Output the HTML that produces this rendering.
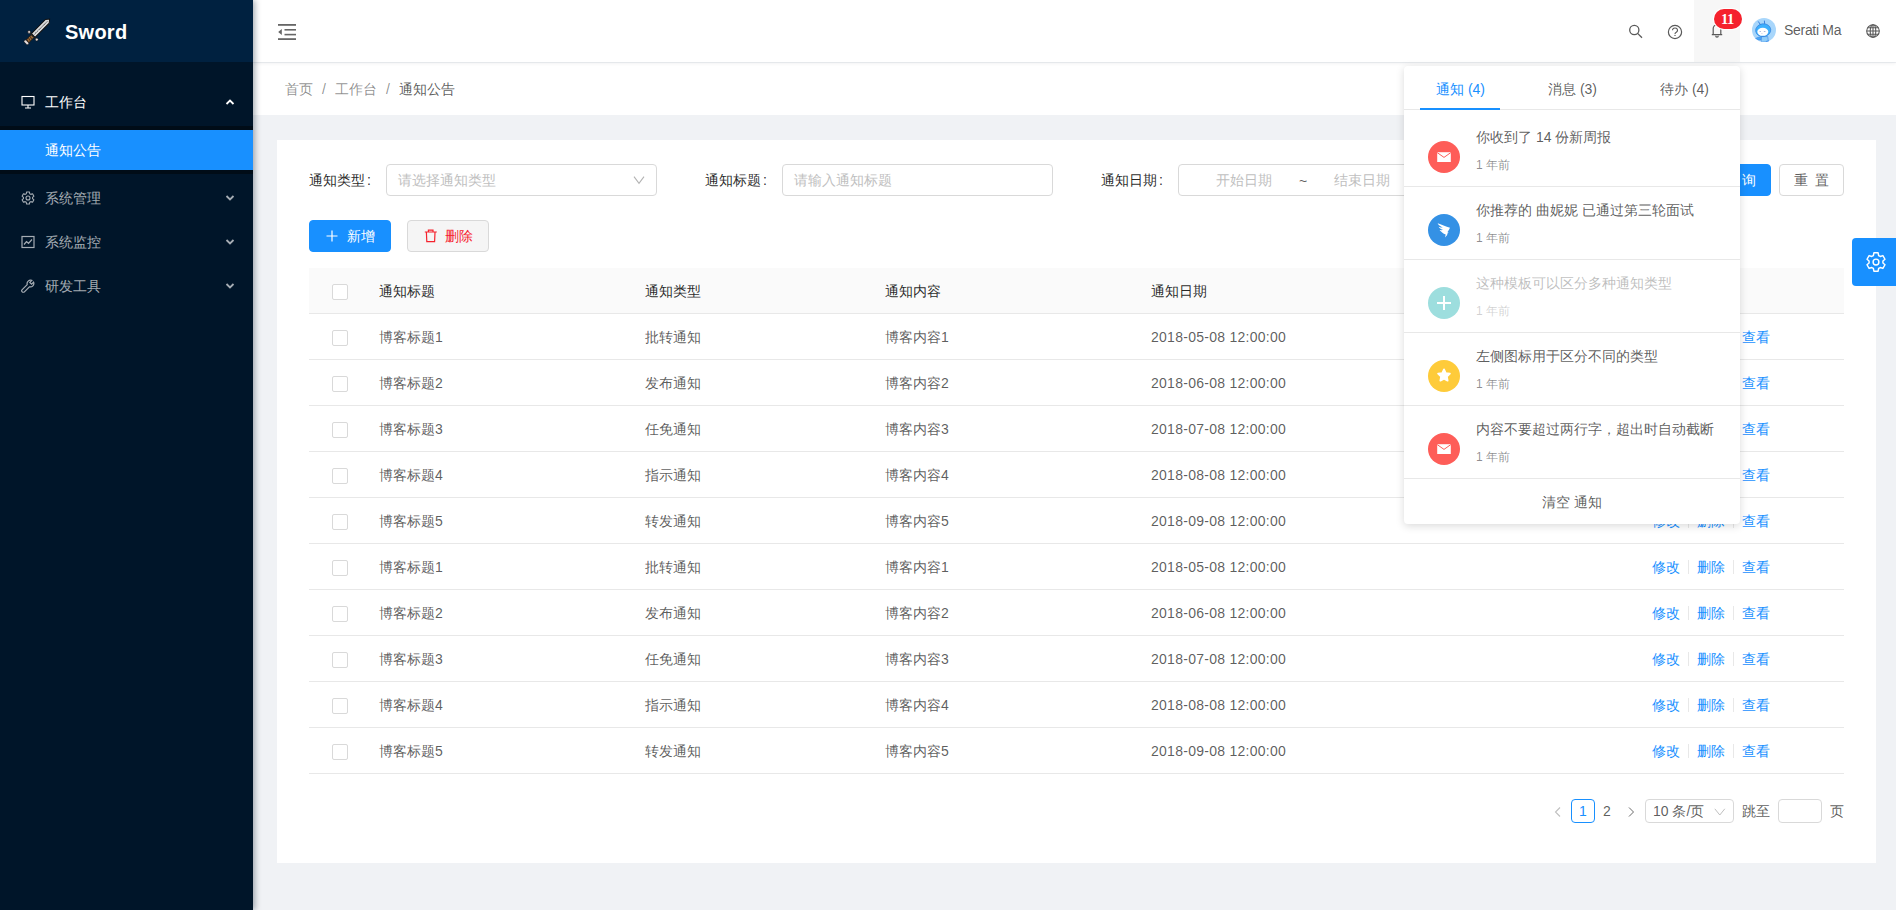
<!DOCTYPE html>
<html><head><meta charset="utf-8">
<style>
*{box-sizing:border-box;margin:0;padding:0}
html,body{width:1896px;height:910px;overflow:hidden}
body{position:relative;background:#f0f2f5;font-family:"Liberation Sans",sans-serif;font-size:14px;color:rgba(0,0,0,.65)}
.abs{position:absolute}
#side{position:absolute;left:0;top:0;width:253px;height:910px;background:#001529;box-shadow:2px 0 6px rgba(0,21,41,.35);z-index:5}
#logo{position:absolute;left:0;top:0;width:253px;height:62px;background:#002140}
#logo .t{position:absolute;left:65px;top:20px;font-size:20px;font-weight:bold;color:#fff;line-height:24px;letter-spacing:.25px}
.mi{position:absolute;left:0;width:253px;height:40px;line-height:40px;color:rgba(255,255,255,.65)}
.mi .tx{position:absolute;left:45px;top:0}
.mi svg.ic{position:absolute;left:21px;top:13px}
.mi svg.ar{position:absolute;left:225px;top:17px}
#header{position:absolute;left:253px;top:0;right:0;height:62px;background:#fff;box-shadow:0 1px 4px rgba(0,21,41,.08);z-index:2}
#bc{position:absolute;left:253px;top:63px;right:0;height:52px;background:#fff;z-index:1}
#card{position:absolute;left:277px;top:140px;width:1599px;height:723px;background:#fff}
.lbl{position:absolute;color:rgba(0,0,0,.85);line-height:20px}
.inp{position:absolute;height:32px;border:1px solid #d9d9d9;border-radius:4px;background:#fff}
.ph{position:absolute;color:#bfbfbf;line-height:20px}
.btn{position:absolute;height:32px;border-radius:4px;line-height:30px;text-align:center}
.cb{position:absolute;width:16px;height:16px;border:1px solid #d9d9d9;border-radius:2px;background:#fff}
.row{position:absolute;left:309px;width:1535px;height:46px;border-bottom:1px solid #e8e8e8}
.cell{position:absolute;top:13px;line-height:20px}
.act{color:#1890ff}
.dv{display:inline-block;width:1px;height:14px;background:#e8e8e8;margin:0 8px;vertical-align:-2px}
#pop{position:absolute;left:1404px;top:66px;width:336px;height:458px;background:#fff;border-radius:4px;box-shadow:0 2px 8px rgba(0,0,0,.15);z-index:10}
.tab{top:13px;line-height:20px;width:48px;white-space:nowrap;color:rgba(0,0,0,.65)}
.nitem{left:0;width:336px;height:73px}
.av{left:24px;width:32px;height:32px;border-radius:50%}
.nt{left:72px;line-height:22px;color:rgba(0,0,0,.65);white-space:nowrap}
.nd{left:72px;font-size:12px;line-height:18px;color:rgba(0,0,0,.45);white-space:nowrap}
</style></head>
<body>
<div id="side">
  <div id="logo">
    <svg class="abs" style="left:17px;top:12px" width="40" height="40" viewBox="0 0 40 40">
      <g transform="translate(.6 -.9) rotate(45 20 20)">
      <path d="M17.4 26.2 L17.4 6.2 L20 3 L22.6 6.2 L22.6 26.2 Z" fill="#dcdcdc" stroke="#111" stroke-width="1"/>
      <path d="M20 6.5 L20 25" stroke="#222" stroke-width=".9" stroke-dasharray="1.2 .6"/>
      <rect x="15.5" y="26" width="9" height="1.2" fill="#222"/>
      <circle cx="14.6" cy="26.6" r="1.45" fill="#e2dada" stroke="#111" stroke-width=".6"/>
      <circle cx="25.4" cy="26.6" r="1.45" fill="#e2dada" stroke="#111" stroke-width=".6"/>
      <rect x="18" y="27.2" width="4" height="7.6" fill="#9a6a3a" stroke="#111" stroke-width=".7"/>
      <path d="M18 29 L22 30 M18 31.2 L22 32.2 M18 33.4 L22 34.4" stroke="#3a2410" stroke-width=".8"/>
      <rect x="17.3" y="34.6" width="5.4" height="2.6" rx="1" fill="#e6dede" stroke="#111" stroke-width=".6"/>
      </g>
    </svg>
    <div class="t">Sword</div>
  </div>
  <div class="mi" style="top:82px;color:#fff">
    <svg class="ic" width="14" height="14" viewBox="0 0 14 14" fill="none" stroke="#fff" stroke-width="1.1"><rect x="1" y="1.5" width="12" height="8.5"/><path d="M7 10v3M4 13h6"/></svg>
    <span class="tx">工作台</span>
    <svg class="ar" width="10" height="6" viewBox="0 0 10 6" fill="none" stroke="#fff" stroke-width="1.8"><path d="M1.5 5L5 1.5L8.5 5"/></svg>
  </div>
  <div class="abs" style="left:0;top:126px;width:253px;height:48px;background:#000c17"></div>
  <div class="mi" style="top:130px;background:#1890ff;color:#fff"><span class="tx">通知公告</span></div>
  <div class="mi" style="top:178px">
    <svg class="ic" width="14" height="14" viewBox="0 0 14 14" fill="none" stroke="rgba(255,255,255,.65)" stroke-width="1.1" stroke-linejoin="round"><path d="M5.28 2.73 L5.61 0.96 L8.39 0.96 L8.72 2.73 L9.83 3.38 L11.53 2.77 L12.93 5.19 L11.56 6.36 L11.56 7.64 L12.93 8.81 L11.53 11.23 L9.83 10.62 L8.72 11.27 L8.39 13.04 L5.61 13.04 L5.28 11.27 L4.17 10.62 L2.47 11.23 L1.07 8.81 L2.44 7.64 L2.44 6.36 L1.07 5.19 L2.47 2.77 L4.17 3.38Z"/><circle cx="7" cy="7" r="2"/></svg>
    <span class="tx">系统管理</span>
    <svg class="ar" width="10" height="6" viewBox="0 0 10 6" fill="none" stroke="rgba(255,255,255,.65)" stroke-width="1.8"><path d="M1.5 1L5 4.5L8.5 1"/></svg>
  </div>
  <div class="mi" style="top:222px">
    <svg class="ic" width="14" height="14" viewBox="0 0 14 14" fill="none" stroke="rgba(255,255,255,.65)" stroke-width="1.2"><rect x="1" y="1.5" width="12" height="11"/><path d="M3 9.5l2.5-3 2 1.8L11 4.5"/></svg>
    <span class="tx">系统监控</span>
    <svg class="ar" width="10" height="6" viewBox="0 0 10 6" fill="none" stroke="rgba(255,255,255,.65)" stroke-width="1.8"><path d="M1.5 1L5 4.5L8.5 1"/></svg>
  </div>
  <div class="mi" style="top:266px">
    <svg class="ic" width="14" height="14" viewBox="0 0 14 14" fill="none" stroke="rgba(255,255,255,.65)" stroke-width="1.2"><path d="M12.6 3.2l-2 2-1.8-1.8 2-2A3.5 3.5 0 0 0 6.2 5.6L1.2 10.6a1.5 1.5 0 0 0 2.2 2.2l5-5a3.5 3.5 0 0 0 4.2-4.6z"/></svg>
    <span class="tx">研发工具</span>
    <svg class="ar" width="10" height="6" viewBox="0 0 10 6" fill="none" stroke="rgba(255,255,255,.65)" stroke-width="1.8"><path d="M1.5 1L5 4.5L8.5 1"/></svg>
  </div>
</div>
<div id="header">
  <svg class="abs" style="left:25px;top:23px" width="20" height="18" viewBox="0 0 20 18" fill="#666"><rect x="0" y="1" width="18" height="1.8"/><rect x="6.5" y="6" width="11.5" height="1.6"/><rect x="6.5" y="10.8" width="11.5" height="1.6"/><rect x="0" y="15.2" width="18" height="1.8"/><path d="M0.2 9 L3.8 6 L3.8 12 Z"/></svg>
  <svg class="abs" style="left:1374px;top:22px" width="16" height="18" viewBox="0 0 16 18" fill="none" stroke="#595959" stroke-width="1.3"><circle cx="7.3" cy="8" r="4.6"/><path d="M10.6 11.4 L15 15.8"/></svg>
  <svg class="abs" style="left:1414px;top:24px" width="16" height="16" viewBox="0 0 16 16" fill="none" stroke="#595959" stroke-width="1.2"><circle cx="8" cy="8" r="6.6"/><path d="M5.5 6.3a2.5 2.3 0 1 1 3.8 2c-.9.5-1.3.9-1.3 1.6" stroke-width="1.15"/><circle cx="8" cy="11.4" r=".7" fill="#595959" stroke="none"/></svg>
  <div class="abs" style="left:1441px;top:0;width:46px;height:62px;background:#f7f7f7"></div>
  <svg class="abs" style="left:1457px;top:20px" width="14" height="18" viewBox="0 0 14 18" fill="none" stroke="#595959" stroke-width="1.2"><path d="M3.2 14.2V8.6a3.8 3.8 0 0 1 7.6 0V14.2M1.8 14.6h10.4M5.7 15.8a1.3 1.3 0 0 0 2.6 0"/></svg>
  <div class="abs" style="left:1461px;top:9px;width:28px;height:20px;border-radius:10px;background:#f5222d;color:#fff;font-size:14.5px;line-height:21px;text-align:center;box-shadow:0 0 0 1px #fff;font-family:'Liberation Serif',serif;font-weight:bold;letter-spacing:-.4px;text-indent:-1px">11</div>
  <svg class="abs" style="left:1499px;top:18px" width="24" height="24" viewBox="0 0 24 24"><defs><clipPath id="avc"><circle cx="12" cy="12" r="12"/></clipPath></defs><g clip-path="url(#avc)"><rect width="24" height="24" fill="#a8d6fb"/>
<path d="M3.2 20.5c2-1 4-1.6 6.5-1.8l-.5 3.2c-2 .4-4 .4-6-1.4z" fill="#4aa8f8" stroke="#3a7fdc" stroke-width=".5"/>
<path d="M9.6 18.6h6.2l.6 5.4H9.2z" fill="#8fcdf9" stroke="#3a7fdc" stroke-width=".5"/>
<path d="M14 23c.8-.4 2-.6 3-.4l-.4 1.4H13.6z" fill="#3a8ef0"/>
<ellipse cx="11.2" cy="12.2" rx="7.6" ry="6.4" fill="#3eb0fd" stroke="#2f78d8" stroke-width=".6" transform="rotate(-8 11.2 12.2)"/>
<path d="M6.2 3.4L8.4 6.6M12.4 2.6L12.6 5.8" stroke="#2f78d8" stroke-width=".9"/>
<ellipse cx="10.8" cy="13.8" rx="5.5" ry="4" fill="#fff"/>
<path d="M7.6 13.5h1.3M11.8 13.5h1.6M9.5 15l.5.6" stroke="#9fb0d8" stroke-width=".9"/>
</g></svg>
  <div class="abs" style="left:1531px;top:20px;line-height:20px;font-size:14px;color:rgba(0,0,0,.65);letter-spacing:-.3px">Serati Ma</div>
  <svg class="abs" style="left:1613px;top:24px" width="14" height="14" viewBox="0 0 14 14" fill="none" stroke="#595959" stroke-width="1.1"><circle cx="7" cy="7" r="6.3"/><ellipse cx="7" cy="7" rx="2.8" ry="6.3"/><path d="M7 .7v12.6M.7 7h12.6M1.6 3.8h10.8M1.6 10.2h10.8"/></svg>
</div>
<div id="bc">
  <div class="abs" style="left:32px;top:16px;line-height:20px;color:rgba(0,0,0,.45)">首页<span style="margin:0 9px">/</span>工作台<span style="margin:0 9px">/</span><span style="color:rgba(0,0,0,.65)">通知公告</span></div>
</div>
<div id="card"></div>
<div class="lbl" style="left:309px;top:170px">通知类型<span style="margin-left:2px">:</span></div>
<div class="inp" style="left:386px;top:164px;width:271px"><span class="ph" style="left:11px;top:5px">请选择通知类型</span><svg class="abs" style="left:246px;top:11px" width="12" height="9" viewBox="0 0 12 9" fill="none" stroke="#b3b3b3" stroke-width="1.1"><path d="M1 .6L6 7.3L11 .6"/></svg></div>
<div class="lbl" style="left:705px;top:170px">通知标题<span style="margin-left:2px">:</span></div>
<div class="inp" style="left:782px;top:164px;width:271px"><span class="ph" style="left:11px;top:5px">请输入通知标题</span></div>
<div class="lbl" style="left:1101px;top:170px">通知日期<span style="margin-left:2px">:</span></div>
<div class="inp" style="left:1178px;top:164px;width:500px"><span class="ph" style="left:37px;top:5px">开始日期</span><span class="ph" style="left:120px;top:6px;color:rgba(0,0,0,.65)">~</span><span class="ph" style="left:155px;top:5px">结束日期</span></div>
<div class="btn" style="left:1706px;top:164px;width:65px;background:#1890ff;color:#fff;border:1px solid #1890ff;word-spacing:3px">查 询</div>
<div class="btn" style="left:1779px;top:164px;width:65px;background:#fff;border:1px solid #d9d9d9;color:rgba(0,0,0,.65);word-spacing:3px">重 置</div>
<div class="btn" style="left:309px;top:220px;width:82px;background:#1890ff;color:#fff;border:1px solid #1890ff"><svg class="abs" style="left:16px;top:9px" width="12" height="12" viewBox="0 0 12 12" stroke="#fff" stroke-width="1.2"><path d="M6 0.5v11M0.5 6h11"/></svg><span class="abs" style="left:37px;top:0">新增</span></div>
<div class="btn" style="left:407px;top:220px;width:82px;background:#f5f5f5;color:#f5222d;border:1px solid #d9d9d9"><svg class="abs" style="left:16px;top:8px" width="14" height="14" viewBox="0 0 14 14" fill="none" stroke="#f5222d" stroke-width="1.2"><path d="M.8 3h12M4.4 2.8V1.2h4.6V2.8M2.4 3.2l.4 9.4h7.8l.4-9.4"/></svg><span class="abs" style="left:37px;top:0">删除</span></div>
<div class="abs" style="left:309px;top:268px;width:1535px;height:46px;background:#fafafa;border-bottom:1px solid #e8e8e8"></div>
<div class="cb" style="left:332px;top:284px"></div>
<div class="lbl" style="left:379px;top:281px">通知标题</div>
<div class="lbl" style="left:645px;top:281px">通知类型</div>
<div class="lbl" style="left:885px;top:281px">通知内容</div>
<div class="lbl" style="left:1151px;top:281px">通知日期</div>
<div class="row" style="top:314px"><div class="cb" style="left:23px;top:16px"></div><div class="cell" style="left:70px">博客标题1</div><div class="cell" style="left:336px">批转通知</div><div class="cell" style="left:576px">博客内容1</div><div class="cell" style="left:842px;letter-spacing:.27px">2018-05-08 12:00:00</div><div class="cell act" style="left:1343px">修改<i class="dv"></i>删除<i class="dv"></i>查看</div></div>
<div class="row" style="top:360px"><div class="cb" style="left:23px;top:16px"></div><div class="cell" style="left:70px">博客标题2</div><div class="cell" style="left:336px">发布通知</div><div class="cell" style="left:576px">博客内容2</div><div class="cell" style="left:842px;letter-spacing:.27px">2018-06-08 12:00:00</div><div class="cell act" style="left:1343px">修改<i class="dv"></i>删除<i class="dv"></i>查看</div></div>
<div class="row" style="top:406px"><div class="cb" style="left:23px;top:16px"></div><div class="cell" style="left:70px">博客标题3</div><div class="cell" style="left:336px">任免通知</div><div class="cell" style="left:576px">博客内容3</div><div class="cell" style="left:842px;letter-spacing:.27px">2018-07-08 12:00:00</div><div class="cell act" style="left:1343px">修改<i class="dv"></i>删除<i class="dv"></i>查看</div></div>
<div class="row" style="top:452px"><div class="cb" style="left:23px;top:16px"></div><div class="cell" style="left:70px">博客标题4</div><div class="cell" style="left:336px">指示通知</div><div class="cell" style="left:576px">博客内容4</div><div class="cell" style="left:842px;letter-spacing:.27px">2018-08-08 12:00:00</div><div class="cell act" style="left:1343px">修改<i class="dv"></i>删除<i class="dv"></i>查看</div></div>
<div class="row" style="top:498px"><div class="cb" style="left:23px;top:16px"></div><div class="cell" style="left:70px">博客标题5</div><div class="cell" style="left:336px">转发通知</div><div class="cell" style="left:576px">博客内容5</div><div class="cell" style="left:842px;letter-spacing:.27px">2018-09-08 12:00:00</div><div class="cell act" style="left:1343px">修改<i class="dv"></i>删除<i class="dv"></i>查看</div></div>
<div class="row" style="top:544px"><div class="cb" style="left:23px;top:16px"></div><div class="cell" style="left:70px">博客标题1</div><div class="cell" style="left:336px">批转通知</div><div class="cell" style="left:576px">博客内容1</div><div class="cell" style="left:842px;letter-spacing:.27px">2018-05-08 12:00:00</div><div class="cell act" style="left:1343px">修改<i class="dv"></i>删除<i class="dv"></i>查看</div></div>
<div class="row" style="top:590px"><div class="cb" style="left:23px;top:16px"></div><div class="cell" style="left:70px">博客标题2</div><div class="cell" style="left:336px">发布通知</div><div class="cell" style="left:576px">博客内容2</div><div class="cell" style="left:842px;letter-spacing:.27px">2018-06-08 12:00:00</div><div class="cell act" style="left:1343px">修改<i class="dv"></i>删除<i class="dv"></i>查看</div></div>
<div class="row" style="top:636px"><div class="cb" style="left:23px;top:16px"></div><div class="cell" style="left:70px">博客标题3</div><div class="cell" style="left:336px">任免通知</div><div class="cell" style="left:576px">博客内容3</div><div class="cell" style="left:842px;letter-spacing:.27px">2018-07-08 12:00:00</div><div class="cell act" style="left:1343px">修改<i class="dv"></i>删除<i class="dv"></i>查看</div></div>
<div class="row" style="top:682px"><div class="cb" style="left:23px;top:16px"></div><div class="cell" style="left:70px">博客标题4</div><div class="cell" style="left:336px">指示通知</div><div class="cell" style="left:576px">博客内容4</div><div class="cell" style="left:842px;letter-spacing:.27px">2018-08-08 12:00:00</div><div class="cell act" style="left:1343px">修改<i class="dv"></i>删除<i class="dv"></i>查看</div></div>
<div class="row" style="top:728px"><div class="cb" style="left:23px;top:16px"></div><div class="cell" style="left:70px">博客标题5</div><div class="cell" style="left:336px">转发通知</div><div class="cell" style="left:576px">博客内容5</div><div class="cell" style="left:842px;letter-spacing:.27px">2018-09-08 12:00:00</div><div class="cell act" style="left:1343px">修改<i class="dv"></i>删除<i class="dv"></i>查看</div></div>
<div class="abs" style="left:1553px;top:805px"><svg width="10" height="12" viewBox="0 0 10 12" fill="none" stroke="rgba(0,0,0,.25)" stroke-width="1.1"><path d="M7 1.5L2.5 6 7 10.5"/></svg></div>
<div class="abs" style="left:1571px;top:799px;width:24px;height:24px;border:1px solid #1890ff;border-radius:4px;color:#1890ff;text-align:center;line-height:22px">1</div>
<div class="abs" style="left:1599px;top:799px;width:16px;height:24px;color:rgba(0,0,0,.65);text-align:center;line-height:24px">2</div>
<div class="abs" style="left:1626px;top:805px"><svg width="10" height="12" viewBox="0 0 10 12" fill="none" stroke="rgba(0,0,0,.65)" stroke-width=".9"><path d="M3 1.5L7.5 6 3 10.5"/></svg></div>
<div class="inp" style="left:1645px;top:799px;width:89px;height:24px"><span class="abs" style="left:7px;top:1px;line-height:20px;color:rgba(0,0,0,.65)">10 条/页</span><svg class="abs" style="left:68px;top:8px" width="12" height="8" viewBox="0 0 12 8" fill="none" stroke="#bfbfbf" stroke-width="1"><path d="M.8 .8l5 6.2 5-6.2"/></svg></div>
<div class="abs" style="left:1742px;top:801px;line-height:20px;color:rgba(0,0,0,.65)">跳至</div>
<div class="inp" style="left:1778px;top:799px;width:44px;height:24px"></div>
<div class="abs" style="left:1830px;top:801px;line-height:20px;color:rgba(0,0,0,.65)">页</div>
<div class="abs" style="left:1852px;top:238px;width:44px;height:48px;background:#1890ff;border-radius:4px 0 0 4px;z-index:3"><svg class="abs" style="left:13px;top:13px" width="22" height="22" viewBox="0 0 22 22" fill="none" stroke="#fff" stroke-width="1.45" stroke-linejoin="round"><path d="M8.38 4.51 L8.89 1.84 L13.11 1.84 L13.62 4.51 L15.31 5.48 L17.87 4.59 L19.99 8.25 L17.93 10.03 L17.93 11.97 L19.99 13.75 L17.87 17.41 L15.31 16.52 L13.62 17.49 L13.11 20.16 L8.89 20.16 L8.38 17.49 L6.69 16.52 L4.13 17.41 L2.01 13.75 L4.07 11.97 L4.07 10.03 L2.01 8.25 L4.13 4.59 L6.69 5.48Z"/><circle cx="11" cy="11" r="2.9"/></svg></div>

<div id="pop">
<div class="abs" style="left:0;top:0;width:336px;height:44px;border-bottom:1px solid #e8e8e8"></div>
<div class="abs" style="left:16px;top:42px;width:80px;height:2px;background:#1890ff"></div>
<div class="abs tab" style="left:32px;color:#1890ff">通知 (4)</div>
<div class="abs tab" style="left:144px">消息 (3)</div>
<div class="abs tab" style="left:256px">待办 (4)</div>
<div class="abs nitem" style="top:44px;opacity:1"><div class="abs av" style="top:31px;background:#fe5d58"><svg class="abs" style="left:8px;top:10px" width="16" height="12" viewBox="0 0 16 12"><path d="M1.2 1.2h13.6v9.8H1.2z" fill="#fff"/><path d="M1.2 1.6L8 6.4l6.8-4.8" fill="none" stroke="#fe5d58" stroke-width="1"/></svg></div><div class="abs nt" style="top:16px">你收到了 14 份新周报</div><div class="abs nd" style="top:46px">1 年前</div></div>
<div class="abs" style="left:0;top:120px;width:336px;height:1px;background:#e8e8e8"></div>
<div class="abs nitem" style="top:117px;opacity:1"><div class="abs av" style="top:31px;background:#3491e5"><svg class="abs" style="left:8px;top:8px" width="16" height="17" viewBox="0 0 16 17"><path d="M1.6 1.2C5 2.6 10 4.2 14 5.8c-.6 1.6-1.6 3.2-2.6 4.4l1.2.2-1.8 1.8.8.2L9 15.6l.7-3C7 11.6 5 9.8 3.6 8c1.4.2 2.6.2 3.6 0C5.6 7.4 3.2 6.4 2.6 4.8c1.6.6 3 .8 4.2.8C4.8 4.6 2.6 3.2 1.6 1.2z" fill="#fff"/></svg></div><div class="abs nt" style="top:16px">你推荐的 曲妮妮 已通过第三轮面试</div><div class="abs nd" style="top:46px">1 年前</div></div>
<div class="abs" style="left:0;top:193px;width:336px;height:1px;background:#e8e8e8"></div>
<div class="abs nitem" style="top:190px;opacity:0.4"><div class="abs av" style="top:31px;background:#0dadad"><svg class="abs" style="left:9px;top:9px" width="14" height="14" viewBox="0 0 14 14"><path d="M6 0h2v14H6zM0 6h14v2H0z" fill="#fff"/></svg></div><div class="abs nt" style="top:16px">这种模板可以区分多种通知类型</div><div class="abs nd" style="top:46px">1 年前</div></div>
<div class="abs" style="left:0;top:266px;width:336px;height:1px;background:#e8e8e8"></div>
<div class="abs nitem" style="top:263px;opacity:1"><div class="abs av" style="top:31px;background:#fecb3a"><svg class="abs" style="left:8px;top:7px" width="16" height="16" viewBox="0 0 16 16"><path d="M8.00 2.40 L9.76 6.17 L13.90 6.68 L10.85 9.53 L11.64 13.62 L8.00 11.60 L4.36 13.62 L5.15 9.53 L2.10 6.68 L6.24 6.17Z" fill="#fff" stroke="#fff" stroke-width="1.8" stroke-linejoin="round"/></svg></div><div class="abs nt" style="top:16px">左侧图标用于区分不同的类型</div><div class="abs nd" style="top:46px">1 年前</div></div>
<div class="abs" style="left:0;top:339px;width:336px;height:1px;background:#e8e8e8"></div>
<div class="abs nitem" style="top:336px;opacity:1"><div class="abs av" style="top:31px;background:#fe5d58"><svg class="abs" style="left:8px;top:10px" width="16" height="12" viewBox="0 0 16 12"><path d="M1.2 1.2h13.6v9.8H1.2z" fill="#fff"/><path d="M1.2 1.6L8 6.4l6.8-4.8" fill="none" stroke="#fe5d58" stroke-width="1"/></svg></div><div class="abs nt" style="top:16px">内容不要超过两行字，超出时自动截断</div><div class="abs nd" style="top:46px">1 年前</div></div>
<div class="abs" style="left:0;top:412px;width:336px;height:1px;background:#e8e8e8"></div>
<div class="abs" style="left:0;top:414px;width:336px;height:44px;line-height:44px;text-align:center;color:rgba(0,0,0,.65)">清空 通知</div>
</div>
</body></html>
